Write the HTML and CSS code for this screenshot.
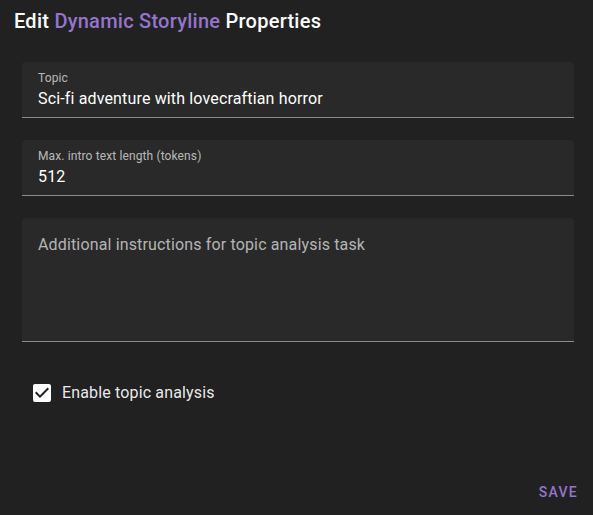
FILE: index.html
```html
<!DOCTYPE html>
<html lang="en">
<head>
<meta charset="utf-8">
<title>Edit Dynamic Storyline Properties</title>
<link rel="stylesheet" href="styles.css">
</head>
<body>
<div class="dialog">
  <h1 class="title">Edit <span class="accent">Dynamic Storyline</span> Properties</h1>
  <div class="form">
    <div class="field">
      <div class="label">Topic</div>
      <div class="value">Sci-fi adventure with lovecraftian horror</div>
    </div>
    <div class="field">
      <div class="label">Max. intro text length (tokens)</div>
      <div class="value">512</div>
    </div>
    <div class="field field-multi">
      <div class="placeholder">Additional instructions for topic analysis task</div>
    </div>
    <div class="check-row">
      <span class="check-box">
        <svg viewBox="0 0 24 24" width="24" height="24"><path fill="#ffffff" d="M10,17L5,12L6.41,10.58L10,14.17L17.59,6.58L19,8M19,3H5C3.89,3 3,3.89 3,5V19A2,2 0 0,0 5,21H19A2,2 0 0,0 21,19V5C21,3.89 20.1,3 19,3Z"/></svg>
      </span>
      <span class="check-label">Enable topic analysis</span>
    </div>
  </div>
  <div class="actions">
    <button class="btn">Save</button>
  </div>
</div>
</body>
</html>
```
FILE: styles.css
```css
html, body {
  margin: 0;
  padding: 0;
  height: 100%;
  background: #212121;
}
body {
  font-family: Roboto, "Noto Sans", Arial, sans-serif;
  color: #ffffff;
}
.dialog {
  height: 100%;
  display: flex;
  flex-direction: column;
  box-sizing: border-box;
}
.title {
  margin: 0;
  padding: 5px 14px 0;
  font-size: 20px;
  line-height: 32px;
  font-weight: 500;
  letter-spacing: 0.25px;
  color: #ffffff;
}
.accent {
  color: #9575cd;
}
.form {
  padding: 25px 19px 0 22px;
  display: flex;
  flex-direction: column;
  gap: 22px;
}
.field {
  height: 56px;
  box-sizing: border-box;
  background: #292929;
  border-radius: 4px 4px 0 0;
  border-bottom: 1px solid #8c8c8c;
  padding: 8px 16px 0;
}
.field-multi {
  height: 124px;
  padding-top: 15px;
}
.label {
  font-size: 12px;
  line-height: 16px;
  letter-spacing: 0.12px;
  color: rgba(255, 255, 255, 0.68);
}
.value {
  margin-top: 1px;
  font-size: 16px;
  line-height: 24px;
  letter-spacing: 0.15px;
  color: #ffffff;
}
.placeholder {
  font-size: 16px;
  line-height: 24px;
  letter-spacing: 0.15px;
  color: rgba(255, 255, 255, 0.66);
}
.check-row {
  margin-top: 9px;
  display: flex;
  align-items: center;
  height: 40px;
}
.check-box {
  width: 40px;
  height: 40px;
  display: flex;
  align-items: center;
  justify-content: center;
  flex: none;
}
.check-box svg {
  display: block;
}
.check-label {
  font-size: 16px;
  line-height: 24px;
  letter-spacing: 0.15px;
  color: rgba(255, 255, 255, 0.92);
}
.actions {
  margin-top: auto;
  display: flex;
  justify-content: flex-end;
  padding: 0 14px 5px 0;
}
.btn {
  background: transparent;
  border: none;
  height: 36px;
  padding: 0 1px 0 8px;
  font-family: Roboto, "Noto Sans", Arial, sans-serif;
  font-size: 14px;
  font-weight: 500;
  line-height: 36px;
  letter-spacing: 1.25px;
  text-transform: uppercase;
  color: #9575cd;
  cursor: pointer;
}
```
